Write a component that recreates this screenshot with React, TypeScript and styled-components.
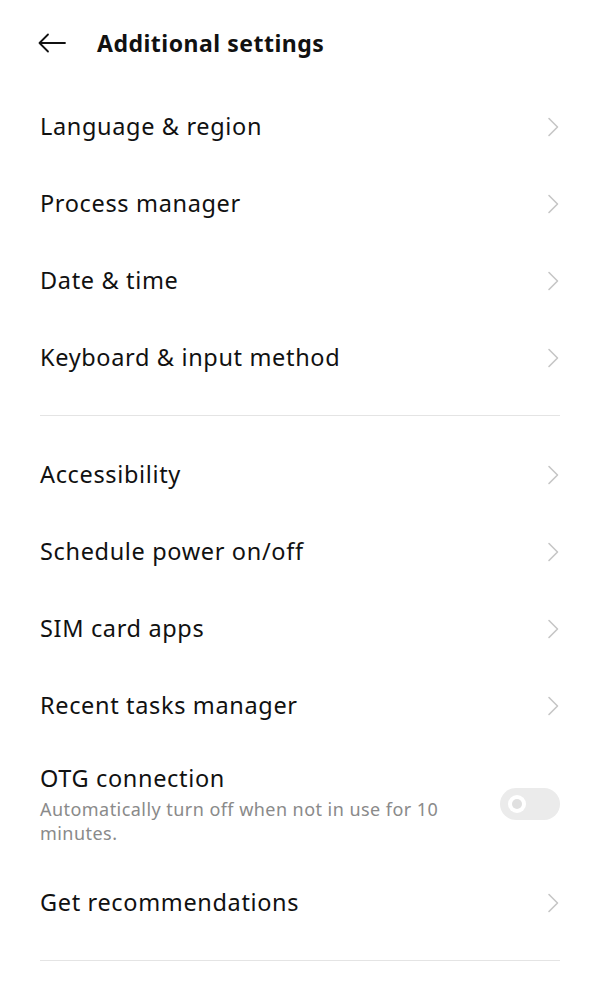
import React from "react";
import styled, { createGlobalStyle } from "styled-components";

const Global = createGlobalStyle`
  html, body { margin: 0; padding: 0; background: #ffffff; }
  body { font-family: "Noto Sans", "Open Sans", "Liberation Sans", sans-serif; color: #111; }
`;

const Page = styled.div`
  width: 600px;
  display: flex;
  flex-direction: column;
`;

const Header = styled.header`
  height: 88px;
  display: flex;
  align-items: center;
  padding: 0 40px 3px 38px;
  box-sizing: border-box;
  gap: 31px;
`;

const BackIcon = styled.svg`
  width: 28px;
  height: 20px;
  flex: none;
`;

const Title = styled.h1`
  margin: 0;
  font-size: 23px;
  font-weight: 700;
  color: #111;
  letter-spacing: 0.5px;
`;

const Group = styled.section`
  display: flex;
  flex-direction: column;
`;

const Divider = styled.hr`
  margin: 19px 40px 20px;
  border: 0;
  height: 1px;
  background: #e4e4e4;
`;

const Row = styled.div<{ $tall?: boolean }>`
  height: ${(p) => (p.$tall ? 120 : 77)}px;
  display: flex;
  align-items: center;
  justify-content: space-between;
  padding: 0 40px;
  box-sizing: border-box;
`;

const TextCol = styled.div`
  display: flex;
  flex-direction: column;
  max-width: 420px;
`;

const Label = styled.span`
  font-size: 23.5px;
  color: #111;
  line-height: 30px;
  letter-spacing: 0.65px;
  margin-top: -1px;
`;

const Sub = styled.span`
  font-size: 18px;
  color: #8a8a8a;
  line-height: 24px;
  letter-spacing: 0.45px;
  margin-top: 4px;
`;

const Chevron = styled.svg`
  width: 12px;
  height: 20px;
  flex: none;
  margin-right: 1px;
`;

const Toggle = styled.div`
  width: 60px;
  height: 32px;
  border-radius: 16px;
  background: #ebebeb;
  position: relative;
  flex: none;
`;

const Knob = styled.div`
  position: absolute;
  left: 8px;
  top: 7px;
  width: 18px;
  height: 18px;
  border-radius: 50%;
  background: #ffffff;
  display: flex;
  align-items: center;
  justify-content: center;
  &::after {
    content: "";
    width: 10px;
    height: 10px;
    border-radius: 50%;
    background: #e0e0e0;
  }
`;

const ChevronIcon = () => (
  <Chevron viewBox="0 0 12 20">
    <path d="M2 1.5 L10.5 10 L2 18.5" fill="none" stroke="#c6c6c6" strokeWidth="1.6" strokeLinecap="round" strokeLinejoin="round" />
  </Chevron>
);

const NavRow = ({ label }: { label: string }) => (
  <Row>
    <Label>{label}</Label>
    <ChevronIcon />
  </Row>
);

export default function App() {
  return (
    <Page>
      <Global />
      <Header>
        <BackIcon viewBox="0 0 28 20">
          <path d="M27 10 H1.5 M10 1.5 L1.5 10 L10 18.5" fill="none" stroke="#111" strokeWidth="1.8" strokeLinecap="round" strokeLinejoin="round" />
        </BackIcon>
        <Title>Additional settings</Title>
      </Header>
      <Group>
        <NavRow label="Language & region" />
        <NavRow label="Process manager" />
        <NavRow label="Date & time" />
        <NavRow label="Keyboard & input method" />
      </Group>
      <Divider />
      <Group>
        <NavRow label="Accessibility" />
        <NavRow label="Schedule power on/off" />
        <NavRow label="SIM card apps" />
        <NavRow label="Recent tasks manager" />
        <Row $tall>
          <TextCol>
            <Label>OTG connection</Label>
            <Sub>Automatically turn off when not in use for 10 minutes.</Sub>
          </TextCol>
          <Toggle>
            <Knob />
          </Toggle>
        </Row>
        <NavRow label="Get recommendations" />
      </Group>
      <Divider />
    </Page>
  );
}
